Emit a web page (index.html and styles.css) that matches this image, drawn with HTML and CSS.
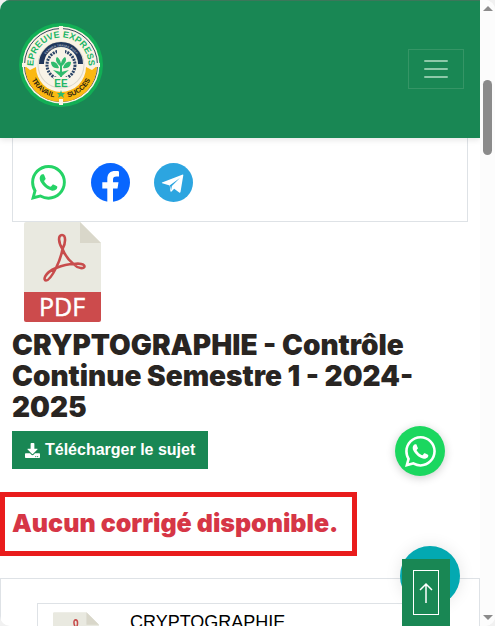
FILE: index.html
```html
<!DOCTYPE html>
<html lang="fr">
<head>
    <meta charset="UTF-8">
    <meta name="viewport" content="width=device-width, initial-scale=1.0">
    <title>Epreuve Express</title>
    <link rel="stylesheet" href="styles.css">
</head>
<body>
    <!-- Shared icons -->
    <svg class="icon-defs" aria-hidden="true">
        <symbol id="icon-whatsapp" viewBox="0 0 16 16">
            <path d="M13.601 2.326A7.854 7.854 0 0 0 7.994 0C3.627 0 .068 3.558.064 7.926c0 1.399.366 2.76 1.057 3.965L0 16l4.204-1.102a7.933 7.933 0 0 0 3.79.965h.004c4.368 0 7.926-3.558 7.93-7.93A7.898 7.898 0 0 0 13.6 2.326zM7.994 14.521a6.573 6.573 0 0 1-3.356-.92l-.24-.144-2.494.654.666-2.433-.156-.251a6.56 6.56 0 0 1-1.007-3.505c0-3.626 2.957-6.584 6.591-6.584a6.56 6.56 0 0 1 4.66 1.931 6.557 6.557 0 0 1 1.928 4.66c-.004 3.639-2.961 6.592-6.592 6.592zm3.615-4.934c-.197-.099-1.17-.578-1.353-.646-.182-.065-.315-.099-.445.099-.133.197-.513.646-.627.775-.114.133-.232.148-.43.05-.197-.1-.836-.308-1.592-.985-.59-.525-.985-1.175-1.103-1.372-.114-.198-.011-.304.088-.403.087-.088.197-.232.296-.346.1-.114.133-.198.198-.33.065-.134.034-.248-.015-.347-.05-.099-.445-1.076-.612-1.47-.16-.389-.323-.335-.445-.34-.114-.007-.247-.007-.38-.007a.729.729 0 0 0-.529.247c-.182.198-.691.677-.691 1.654 0 .977.71 1.916.81 2.049.098.133 1.394 2.132 3.383 2.992.47.205.84.326 1.129.418.475.152.904.129 1.246.08.38-.058 1.171-.48 1.338-.943.164-.464.164-.86.114-.943-.049-.084-.182-.133-.38-.232z"/>
        </symbol>
        <symbol id="icon-pdf" viewBox="0 0 77 100">
            <path fill="#e9e9e0" d="M2 0h54l21 21v50H0V2a2 2 0 0 1 2-2z"/>
            <path fill="#d9d7ca" d="M56 0v21h21z"/>
            <path fill="#cc4b4c" d="M0 70h77v28a2 2 0 0 1-2 2H2a2 2 0 0 1-2-2z"/>
            <path fill="none" stroke="#c84c4c" stroke-width="2.6" stroke-linejoin="round" d="M38.5 27C34 20 34 13 38 13s4 8 .5 14c3 8 6 11 11 15 6-1 11 0 11 2.500S54 47 49.500 42C43 42 37 44 32 46c-4 8-7 12.500-10 12.500S20 51 32 46c4-8 5.500-13 6.500-19z"/>
            <text x="38" y="94" class="pdf-label">PDF</text>
        </symbol>
    </svg>

    <div class="viewport">
        <div class="page">
            <header class="navbar">
                <a href="#" class="brand" aria-label="Epreuve Express">
                    <svg class="logo" viewBox="0 0 84 84">
                        <defs>
                            <path id="arc-top" d="M14.500 42a27.500 27.500 0 0 1 55 0"/>
                            <path id="arc-motto" d="M23.500 42a18.500 18.500 0 0 1 37 0"/>
                            <path id="arc-bottom" d="M9 42a33 33 0 0 0 66 0"/>
                        </defs>
                        <circle cx="42" cy="42" r="42" fill="#12af55"/>
                        <circle cx="42" cy="42" r="38.500" fill="#faf3e5"/>
                        <circle cx="42" cy="42" r="36.500" fill="none" stroke="#34465a" stroke-width="1"/>
                        <path fill="#fbb812" d="M6 43l5 4 6-3a25 25 0 0 0 50 0l6 3 5-4a36 36 0 0 1-72 0z"/>
                        <path fill="#faf3e5" d="M40 3h4v7h-4zM40 76h4v6h-4zM3 40h6v4H3zM75 40h6v4h-6z"/>
                        <circle cx="42" cy="42" r="23.500" fill="#d9d6ca"/>
                        <circle cx="42" cy="42" r="22.500" fill="#f8f3e7"/>
                        <path fill="none" stroke="#20365a" stroke-width="5" d="M22.500 41a19.500 19.500 0 0 1 39 0"/>
                        <circle cx="42" cy="42" r="14" fill="none" stroke="#2b4567" stroke-width="3" stroke-dasharray="2 1"/>
                        <path fill="#f8f3e7" d="M38 26h8v6h-8zM35 54h14v6H35z"/>
                        <g fill="#2fbb6d">
                            <path d="M40 45c-5 1-8-2-8-6 4-1 7 2 8 6zM44 45c5 1 8-2 8-6-4-1-7 2-8 6zM41 43c-4-3-5-7-3-9 3 2 5 6 3 9zM43 43c4-3 5-7 3-9-3 2-5 6-3 9z"/>
                            <path d="M41 40h2v14h-2zM34 47l8 2 8-2-7 6h-2zM42 67l1 3h3l-2 2 1 3-3-2-3 2 1-3-2-2h3z"/>
                        </g>
                        <text class="logo-name"><textPath href="#arc-top" startOffset="50%">EPREUVE EXPRESS</textPath></text>
                        <text class="logo-motto"><textPath href="#arc-motto" startOffset="50%">EXAMEN TRAVAIL PREP</textPath></text>
                        <text class="logo-work"><textPath href="#arc-bottom" startOffset="29%">TRAVAIL</textPath></text>
                        <text class="logo-work"><textPath href="#arc-bottom" startOffset="71%">SUCCES</textPath></text>
                        <text x="42" y="64" class="logo-initials">EE</text>
                    </svg>
                </a>
                <button type="button" class="navbar-toggler" aria-label="Menu">
                    <svg width="30" height="30" viewBox="0 0 30 30">
                        <path stroke="#8dc9a9" stroke-width="2" stroke-linecap="round" d="M4 7h22M4 15h22M4 23h22"/>
                    </svg>
                </button>
            </header>

            <main>
                <div class="container">
                    <div class="share-box">
                        <a href="#" class="share-link whatsapp" aria-label="WhatsApp">
                            <svg width="35" height="35"><use href="#icon-whatsapp"/></svg>
                        </a>
                        <a href="#" class="share-link" aria-label="Facebook">
                            <svg width="39" height="39" viewBox="0 0 39 39">
                                <circle cx="19.500" cy="19.500" r="19.500" fill="#0866ff"/>
                                <path fill="#fff" d="M16.300 39V25.500h-5V19.300h5v-3.100c0-5.700 3-8.200 8-8.200 1.700 0 3 .2 3.700.4v5.200c-.7-.1-1.500-.1-2.500-.1-2.500 0-3.500.9-3.500 3.400v2.400h5.500l-1 6.200H22V39z"/>
                            </svg>
                        </a>
                        <a href="#" class="share-link" aria-label="Telegram">
                            <svg width="39" height="39" viewBox="0 0 39 39">
                                <circle cx="19.500" cy="19.500" r="19.500" fill="#2ca5e0"/>
                                <path fill="#fff" d="M8 19.500L28.800 11.500c.4 0 .6.300.5.700L26.500 29c-.2.700-.8.900-1.300.5l-5-3.700-2.700 2.700c-.5.500-1 .4-1.100-.4l-.7-5.500-7.500-2.300c-.5-.2-.5-.6-.2-.8z"/>
                                <path fill="#2ca5e0" d="M15.900 22.300l10-7.300-8 8-.8 4.300z"/>
                            </svg>
                        </a>
                    </div>

                    <svg class="pdf-icon" role="img" aria-label="PDF"><use href="#icon-pdf"/></svg>
                    <h1 class="title">CRYPTOGRAPHIE - Contrôle Continue Semestre 1 - 2024-2025</h1>
                    <a href="#" class="btn-download">
                        <svg width="15" height="15" viewBox="0 0 512 512" fill="currentColor">
                            <path d="M216 0h80c13 0 24 11 24 24v168h88c18 0 27 21 14 34L270 378c-7 7-20 7-27 0L90 226c-13-13-4-34 14-34h88V24c0-13 11-24 24-24zm296 376v112c0 13-11 24-24 24H24c-13 0-24-11-24-24V376c0-13 11-24 24-24h147l49 49c20 20 52 20 72 0l49-49h147c13 0 24 11 24 24zM388 464c0-11-9-20-20-20s-20 9-20 20 9 20 20 20 20-9 20-20zm64 0c0-11-9-20-20-20s-20 9-20 20 9 20 20 20 20-9 20-20z"/>
                        </svg>
                        Télécharger le sujet
                    </a>
                </div>

                <p class="no-answer">Aucun corrigé disponible.</p>

                <section class="related">
                    <a href="#" class="related-item">
                        <svg class="related-icon" aria-hidden="true"><use href="#icon-pdf"/></svg>
                        <span>CRYPTOGRAPHIE</span>
                    </a>
                </section>
            </main>

            <a href="#" class="whatsapp-float" aria-label="Contact WhatsApp">
                <svg width="31" height="31"><use href="#icon-whatsapp"/></svg>
            </a>
            <button type="button" class="chat-bubble" aria-label="Chat"></button>
            <a href="#" class="back-to-top" aria-label="Haut de page">
                <span class="back-to-top-inner">
                    <svg width="16" height="22" viewBox="0 0 16 22">
                        <path fill="none" stroke="#fff" stroke-width="1.500" d="M8 21V2M2 8l6-6 6 6"/>
                    </svg>
                </span>
            </a>
        </div>

        <!-- Scroll track -->
        <div class="scrollbar" aria-hidden="true">
            <span class="arrow-up"></span>
            <span class="thumb"></span>
            <span class="arrow-down"></span>
        </div>
    </div>
</body>
</html>
```
FILE: styles.css
```css
* {
    margin: 0;
    padding: 0;
    box-sizing: border-box;
}

body {
    font-family: "Liberation Sans", Arial, sans-serif;
    font-size: 16px;
    color: #292522;
    background: #f1f1f1;
}

a {
    color: inherit;
    text-decoration: none;
}

svg {
    display: block;
}

.icon-defs {
    position: absolute;
    width: 0;
    height: 0;
}

.viewport {
    display: flex;
    height: 100vh;
    overflow: hidden;
    border-radius: 10px;
    background: #fff;
}

.page {
    position: relative;
    flex: 1;
    min-width: 0;
    overflow: hidden;
}

/* Navbar */
.navbar {
    position: relative;
    display: flex;
    align-items: center;
    justify-content: space-between;
    padding: 22px 16px 31px 19px;
    background: #198754;
    border-top: 1px solid #3c775a;
    box-shadow: 0 2px 6px rgba(0, 0, 0, 0.1);
}

.logo {
    width: 84px;
    height: 84px;
}

.logo text {
    font-family: "Liberation Sans", Arial, sans-serif;
    font-weight: bold;
    text-anchor: middle;
}

.logo .logo-name {
    font-size: 9px;
    fill: #22b565;
}

.logo .logo-motto {
    font-size: 3px;
    fill: #a9b4c4;
}

.logo .logo-work {
    font-size: 7px;
    fill: #2b2410;
}

.logo .logo-initials {
    font-size: 10px;
    fill: #22b565;
}

.navbar-toggler {
    padding: 4px 12px;
    margin-top: 8px;
    border: 1px solid #359566;
    background: transparent;
}

/* Content */
.container {
    padding: 0 12px;
}

.share-box {
    display: flex;
    align-items: center;
    gap: 24px;
    padding: 25px 18px 19px;
    border: 1px solid #dee2e6;
    border-top: none;
}

.whatsapp {
    margin-right: 1px;
    color: #25d366;
}

.share-link svg,
.whatsapp-float svg {
    fill: currentColor;
}

.pdf-icon {
    width: 77px;
    height: 100px;
    margin: 0 12px;
}

.pdf-label {
    font-family: "Open Sans", sans-serif;
    font-size: 25px;
    text-anchor: middle;
    fill: #fff;
    stroke: #fff;
    stroke-width: 0.5;
}

.title {
    margin: 8px 0;
    font-family: Inter, "Arial Black", sans-serif;
    font-size: 28px;
    font-weight: 900;
    line-height: 31px;
}

.btn-download {
    display: inline-flex;
    align-items: center;
    gap: 5px;
    height: 38px;
    padding: 0 13px;
    font-weight: bold;
    color: #fff;
    background: #198754;
}

.no-answer {
    width: fit-content;
    margin-top: 23px;
    padding: 11px 14px 12px 7px;
    border: 5px solid #e91c1c;
    font-family: Inter, "Arial Black", sans-serif;
    font-size: 25px;
    font-weight: 900;
    line-height: 31px;
    color: #d63646;
}

/* Related papers */
.related {
    margin-top: 22px;
    padding: 24px 36px;
    border: 1px solid #dee2e6;
}

.related-item {
    display: flex;
    gap: 31px;
    padding: 8px 15px;
    border: 1px solid #dee2e6;
    font-size: 18px;
    line-height: 20px;
    color: #000;
}

.related-icon {
    width: 46px;
    height: 60px;
}

/* Floating buttons */
.whatsapp-float {
    position: absolute;
    right: 35px;
    bottom: 150px;
    display: flex;
    align-items: center;
    justify-content: center;
    width: 50px;
    height: 50px;
    border-radius: 50%;
    color: #fff;
    background: #1bd75f;
    box-shadow: 0 2px 10px rgba(0, 0, 0, 0.2);
}

.chat-bubble {
    position: absolute;
    right: 20px;
    bottom: 20px;
    width: 60px;
    height: 60px;
    border: none;
    border-radius: 50%;
    background: #03a9b1;
    box-shadow: 0 0 16px rgba(0, 0, 0, 0.1);
}

.back-to-top {
    position: absolute;
    right: 30px;
    bottom: 0;
    padding: 11px;
    background: #198754;
}

.back-to-top-inner {
    display: flex;
    align-items: center;
    justify-content: center;
    width: 26px;
    height: 45px;
    border: 1px solid #fff;
}

/* Scrollbar */
.scrollbar {
    display: flex;
    flex-direction: column;
    align-items: center;
    width: 15px;
    padding: 6px 0;
    background: #fcfcfc;
}

.arrow-up,
.arrow-down {
    border: 5px solid transparent;
}

.arrow-up {
    border-top: none;
    border-bottom: 5px solid #8b8b8b;
}

.arrow-down {
    margin-top: auto;
    border-bottom: none;
    border-top: 5px solid #8b8b8b;
}

.thumb {
    width: 9px;
    height: 75px;
    margin-top: 69px;
    border-radius: 5px;
    background: #8b8b8b;
}
```
